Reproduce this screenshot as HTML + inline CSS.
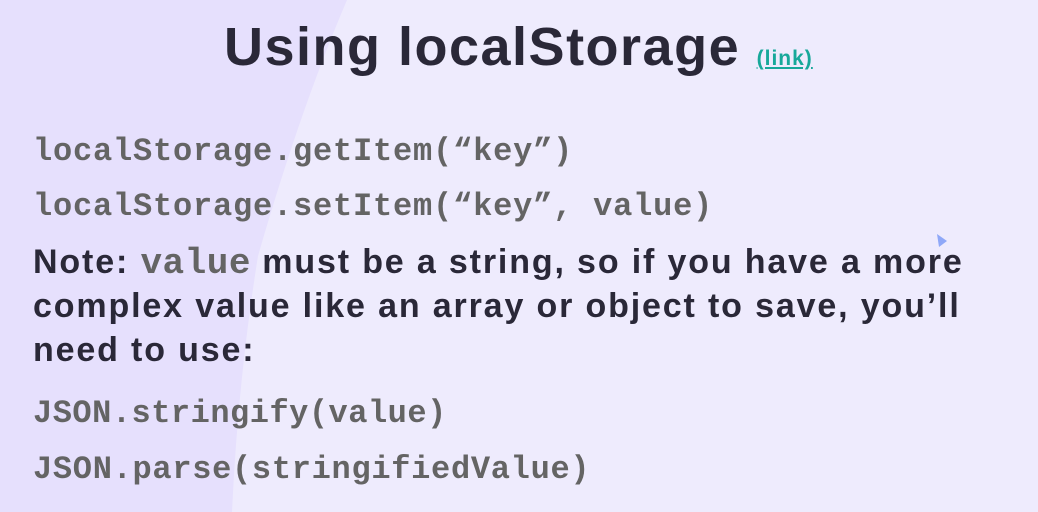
<!DOCTYPE html>
<html><head><meta charset="utf-8"><style>
html,body{margin:0;padding:0;width:1038px;height:512px;overflow:hidden;background:#eeebfd;position:relative}
.t{position:absolute;white-space:nowrap}
.mono{font-family:"Liberation Mono",monospace;font-weight:bold;color:#646464;font-size:32px;left:33px;letter-spacing:0.8px}
.s{font-family:"Liberation Sans",sans-serif;font-weight:bold;color:#2a2838;font-size:34px;left:33px;letter-spacing:1.85px}
</style></head><body>
<svg width="1038" height="512" style="position:absolute;left:0;top:0">
<path d="M0 0 L347 0 Q300 110 258 256 Q238 380 232 512 L0 512 Z" fill="#e6e0fd"/>
<path d="M937 234 L947 241 L939 247 Z" fill="#8fa8f8"/>
</svg>
<div class="t" style="left:224px;top:16px;font-family:'Liberation Sans',sans-serif;font-weight:bold;font-size:54px;letter-spacing:1.5px;color:#2a2838">Using localStorage <span style="font-size:21px;letter-spacing:1px;color:#17a89a;text-decoration:underline">(link)</span></div>
<div class="t mono" style="top:133px">localStorage.getItem(“key”)</div>
<div class="t mono" style="top:188px">localStorage.setItem(“key”, value)</div>
<div class="t s" style="top:243px">Note: <span style="font-family:'Liberation Mono',monospace;color:#646464;font-size:36px;letter-spacing:0.5px">value</span> must be a string, so if you have a more</div>
<div class="t s" style="top:287px">complex value like an array or object to save, you’ll</div>
<div class="t s" style="top:331px">need to use:</div>
<div class="t mono" style="top:395px;letter-spacing:0.5px">JSON.stringify(value)</div>
<div class="t mono" style="top:451px;letter-spacing:0.7px">JSON.parse(stringifiedValue)</div>
</body></html>
